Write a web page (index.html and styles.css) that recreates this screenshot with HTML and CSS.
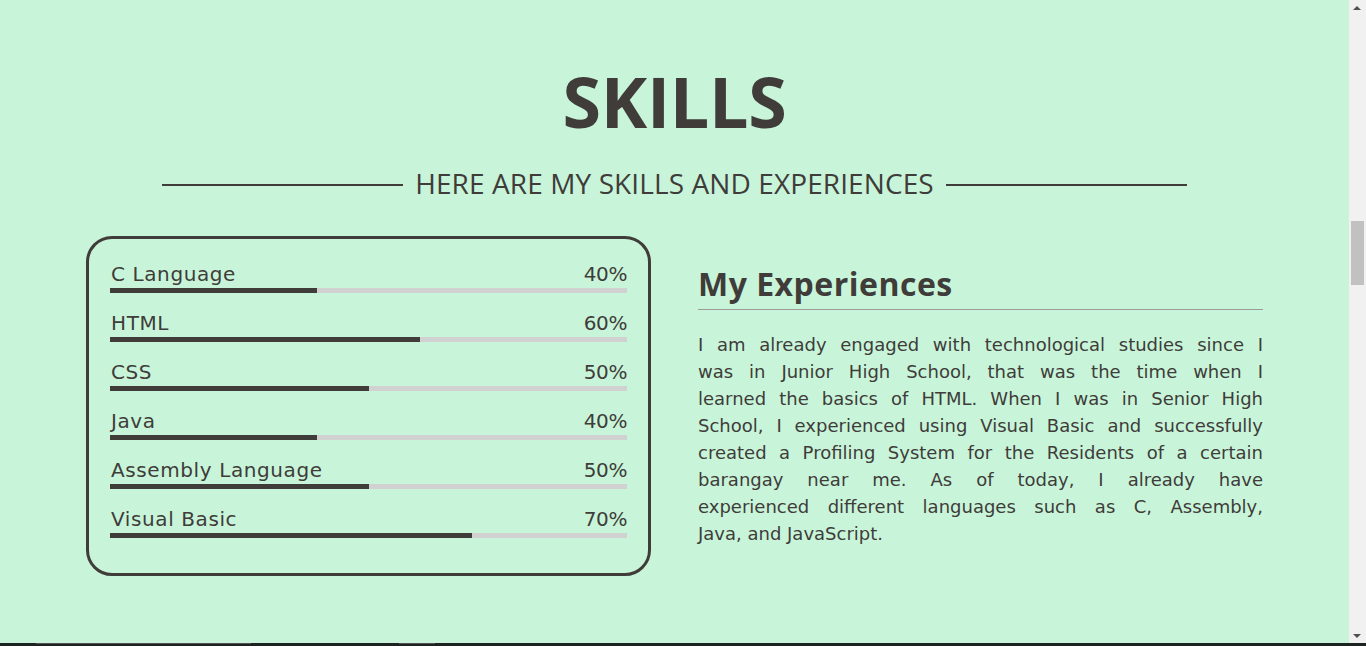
FILE: index.html
```html
<!DOCTYPE html>
<html lang="en">
<head>
<meta charset="utf-8">
<title>Skills</title>
<link rel="stylesheet" href="styles.css">
</head>
<body>
<section class="skills">
  <h1 class="title">SKILLS</h1>
  <div class="subtitle">
    <span class="rule"></span>
    <h2>HERE ARE MY SKILLS AND EXPERIENCES</h2>
    <span class="rule"></span>
  </div>
  <div class="columns">
    <div class="skill-box">
      <div class="skill">
        <div class="skill-head"><span>C Language</span><span class="pct">40%</span></div>
        <div class="track"><div class="fill" style="width:40%"></div></div>
      </div>
      <div class="skill">
        <div class="skill-head"><span>HTML</span><span class="pct">60%</span></div>
        <div class="track"><div class="fill" style="width:60%"></div></div>
      </div>
      <div class="skill">
        <div class="skill-head"><span>CSS</span><span class="pct">50%</span></div>
        <div class="track"><div class="fill" style="width:50%"></div></div>
      </div>
      <div class="skill">
        <div class="skill-head"><span>Java</span><span class="pct">40%</span></div>
        <div class="track"><div class="fill" style="width:40%"></div></div>
      </div>
      <div class="skill">
        <div class="skill-head"><span>Assembly Language</span><span class="pct">50%</span></div>
        <div class="track"><div class="fill" style="width:50%"></div></div>
      </div>
      <div class="skill">
        <div class="skill-head"><span>Visual Basic</span><span class="pct">70%</span></div>
        <div class="track"><div class="fill" style="width:70%"></div></div>
      </div>
    </div>
    <div class="experience">
      <h3>My Experiences</h3>
      <p>
        <span class="ln">I am already engaged with technological studies since I</span>
        <span class="ln">was in Junior High School, that was the time when I</span>
        <span class="ln">learned the basics of HTML. When I was in Senior High</span>
        <span class="ln">School, I experienced using Visual Basic and successfully</span>
        <span class="ln">created a Profiling System for the Residents of a certain</span>
        <span class="ln">barangay near me. As of today, I already have</span>
        <span class="ln">experienced different languages such as C, Assembly,</span>
        <span class="ln last">Java, and JavaScript.</span>
      </p>
    </div>
  </div>
</section>
<section class="next"></section>

<div class="scrollbar">
  <span class="arrow up"></span>
  <span class="thumb"></span>
  <span class="arrow down"></span>
</div>
<div class="bottom-strip">
  <span class="seg seg-a"></span>
  <span class="seg seg-b"></span>
</div>
</body>
</html>
```

FILE: styles.css
```css
* { box-sizing: border-box; }

html, body {
  margin: 0;
  padding: 0;
}

body {
  background: #c8f5d9;
  color: #3f3c3a;
  font-family: "Open Sans", "Liberation Sans", sans-serif;
  width: 1349px;
}

.skills {
  height: 643px;
  padding-top: 66px;
  display: flex;
  flex-direction: column;
  align-items: center;
}

.title {
  margin: 0;
  font-size: 70px;
  line-height: 70px;
  font-weight: 700;
  letter-spacing: -0.3px;
}

.subtitle {
  margin-top: 33px;
  display: flex;
  align-items: center;
  width: 1025px;
  gap: 12px;
}

.subtitle h2 {
  margin: 0;
  font-size: 28px;
  line-height: 1;
  font-weight: 400;
  letter-spacing: 0.1px;
  white-space: nowrap;
}

.rule {
  flex: 1;
  height: 2px;
  background: #3f3c3a;
  margin-top: 3px;
}

.columns {
  margin-top: 39px;
  display: flex;
  gap: 47px;
  width: 1177px;
  align-items: flex-start;
}

.skill-box {
  width: 565px;
  border: 3px solid #3f3c3a;
  border-radius: 26px;
  padding: 23px 21px 35px;
  display: flex;
  flex-direction: column;
  gap: 18px;
}

.skill-head {
  display: flex;
  justify-content: space-between;
  font-family: "DejaVu Sans", "Open Sans", sans-serif;
  font-size: 20px;
  line-height: 24px;
  letter-spacing: 0.6px;
  padding: 0 0 0 1px;
}

.pct {
  letter-spacing: -0.4px;
}

.track {
  margin-top: 2px;
  height: 5px;
  background: #d1d1d1;
}

.fill {
  height: 100%;
  background: #3f3c3a;
}

.experience {
  width: 565px;
  padding-top: 29px;
}

.experience h3 {
  margin: 0;
  font-size: 32px;
  line-height: 38px;
  font-weight: 700;
  letter-spacing: 0.5px;
  padding-bottom: 6px;
  border-bottom: 1px solid #9b9b9b;
}

.experience p {
  margin: 21px 0 0;
  font-family: "DejaVu Sans", "Open Sans", sans-serif;
  font-size: 18px;
  line-height: 27px;
}

.ln {
  display: block;
  text-align: justify;
  text-align-last: justify;
}

.ln.last {
  text-align-last: left;
}

.next {
  height: 300px;
  background: #1d2320;
}

/* fake browser scrollbar overlay */
.scrollbar {
  position: fixed;
  top: 0;
  right: 0;
  width: 17px;
  height: 646px;
  background: #f1f1f1;
}

.thumb {
  position: absolute;
  left: 2px;
  top: 221px;
  width: 13px;
  height: 64px;
  background: #c1c1c1;
}

.arrow {
  position: absolute;
  left: 4px;
  width: 0;
  height: 0;
  border-left: 4px solid transparent;
  border-right: 4px solid transparent;
}

.arrow.up {
  top: 6px;
  border-bottom: 4px solid #505050;
}

.arrow.down {
  top: 634px;
  border-top: 4px solid #505050;
}

.bottom-strip {
  position: fixed;
  left: 0;
  bottom: 0;
  width: 1366px;
  height: 3px;
  background: #1d2320;
}

.seg {
  position: absolute;
  top: 0;
  height: 1px;
  background: #505551;
}

.seg-a { left: 36px; width: 215px; }
.seg-b { left: 399px; width: 36px; }
```
